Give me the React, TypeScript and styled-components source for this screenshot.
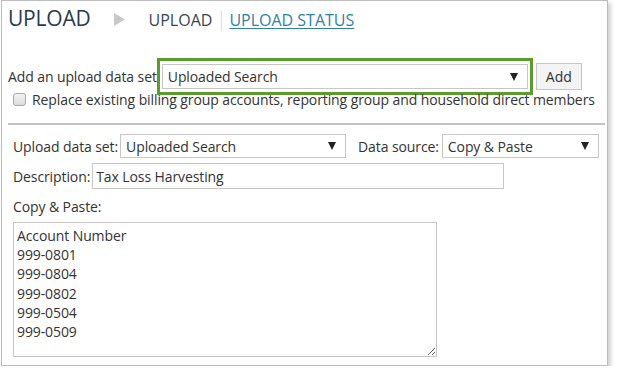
import styled, { createGlobalStyle } from 'styled-components';

const GlobalStyle = createGlobalStyle`
  html, body {
    margin: 0;
    padding: 0;
    background: #ffffff;
  }
  body {
    font-family: "Open Sans", "Noto Sans", Arial, sans-serif;
    color: #333333;
  }
`;

const Frame = styled.div`
  box-sizing: border-box;
  width: 607px;
  height: 366px;
  margin-left: 1px;
  border: 1px solid #bdbdbd;
  background: #ffffff;
  box-shadow: 3px 3px 4px rgba(0, 0, 0, 0.18);
`;

const Header = styled.div`
  box-sizing: border-box;
  display: flex;
  align-items: baseline;
  padding: 3px 0 0 6px;
  height: 43px;
`;

const Title = styled.h1`
  margin: 0;
  font-size: 21px;
  font-weight: 400;
  color: #2a3b4e;
  letter-spacing: -0.2px;
`;

const Crumb = styled.span`
  align-self: flex-start;
  display: flex;
  margin: 9px 24px 0 23px;
`;

const Tab = styled.span`
  font-size: 16px;
  color: #374656;
`;

const TabDivider = styled.span`
  align-self: flex-start;
  width: 1px;
  height: 20px;
  margin: 7px 7px 0 9px;
  background: #dddddd;
`;

const TabLink = styled.a`
  font-size: 16px;
  color: #2f7fab;
  text-decoration: underline;
  text-underline-offset: 2px;
  cursor: pointer;
`;

const AddRow = styled.div`
  display: flex;
  align-items: center;
  margin: 14px 0 0 6px;
`;

const Label = styled.span`
  font-size: 14px;
  letter-spacing: -0.1px;
  color: #333333;
  white-space: nowrap;
`;

const Highlight = styled.div`
  box-sizing: border-box;
  border: 3px solid #5c9b2d;
  padding: 3px 2px;
  width: 376px;
`;

const SelectBox = styled.div<{ $width: number; $height?: number }>`
  box-sizing: border-box;
  display: flex;
  align-items: center;
  justify-content: space-between;
  width: ${(p) => p.$width}px;
  height: ${(p) => p.$height ?? 25}px;
  padding: 0 9px 0 5px;
  border: 1px solid #c6c6c6;
  background: #ffffff;
  font-size: 14px;
  letter-spacing: -0.1px;
  color: #333333;
`;

const Arrow = styled.span`
  width: 0;
  height: 0;
  border-left: 4px solid transparent;
  border-right: 4px solid transparent;
  border-top: 8px solid #222222;
`;

const Button = styled.button`
  box-sizing: border-box;
  margin-left: 3px;
  width: 46px;
  height: 27px;
  border: 1px solid #c6c6c6;
  background: #f4f4f4;
  font-family: inherit;
  font-size: 14px;
  color: #333333;
  padding: 0;
`;

const CheckRow = styled.label`
  display: flex;
  align-items: center;
  margin: -5px 0 0 11px;
  gap: 6px;
`;

const Check = styled.span`
  box-sizing: border-box;
  width: 13px;
  height: 13px;
  border: 1px solid #a9a9a9;
  border-radius: 3px;
  background: linear-gradient(#f2f2f2, #dcdcdc);
`;

const Divider = styled.hr`
  margin: 14px 2px 0 6px;
  border: 0;
  height: 2px;
  background: #c3c3c3;
`;

const Form = styled.div`
  display: flex;
  flex-direction: column;
  padding: 9px 0 0 11px;
`;

const Row = styled.div`
  display: flex;
  align-items: center;
  margin-bottom: 5px;
`;

const FieldLabel = styled(Label)`
  margin-right: 2px;
`;

const SecondLabel = styled(Label)`
  margin: 0 3px 0 12px;
`;

const TextInput = styled.input`
  box-sizing: border-box;
  width: 412px;
  height: 26px;
  border: 1px solid #c6c6c6;
  padding: 0 3px;
  font-family: inherit;
  font-size: 14px;
  letter-spacing: -0.1px;
  color: #333333;
  outline: none;
`;

const PasteLabel = styled(Label)`
  display: block;
  margin: 3px 0 6px;
`;

const PasteArea = styled.textarea`
  box-sizing: border-box;
  width: 424px;
  height: 135px;
  border: 1px solid #c6c6c6;
  padding: 3px 3px;
  font-family: inherit;
  font-size: 14px;
  line-height: 19.2px;
  letter-spacing: -0.1px;
  color: #333333;
  outline: none;
`;

const accounts = ['Account Number', '999-0801', '999-0804', '999-0802', '999-0504', '999-0509'];

export default function App() {
  return (
    <>
      <GlobalStyle />
      <Frame>
        <Header>
          <Title>UPLOAD</Title>
          <Crumb>
            <svg width="11" height="13" viewBox="0 0 11 13">
              <path d="M0 0 L11 6.5 L0 13 Z" fill="#c9c9c9" />
            </svg>
          </Crumb>
          <Tab>UPLOAD</Tab>
          <TabDivider />
          <TabLink>UPLOAD STATUS</TabLink>
        </Header>

        <AddRow>
          <Label>Add an upload data set</Label>
          <Highlight>
            <SelectBox $width={366}>
              Uploaded Search
              <Arrow />
            </SelectBox>
          </Highlight>
          <Button>Add</Button>
        </AddRow>

        <CheckRow>
          <Check />
          <Label>Replace existing billing group accounts, reporting group and household direct members</Label>
        </CheckRow>

        <Divider />

        <Form>
          <Row>
            <FieldLabel>Upload data set:</FieldLabel>
            <SelectBox $width={226} $height={24}>
              Uploaded Search
              <Arrow />
            </SelectBox>
            <SecondLabel>Data source:</SecondLabel>
            <SelectBox $width={157} $height={24}>
              Copy &amp; Paste
              <Arrow />
            </SelectBox>
          </Row>
          <Row>
            <FieldLabel>Description:</FieldLabel>
            <TextInput defaultValue="Tax Loss Harvesting" />
          </Row>
          <PasteLabel>Copy &amp; Paste:</PasteLabel>
          <PasteArea defaultValue={accounts.join('\n')} />
        </Form>
      </Frame>
    </>
  );
}
